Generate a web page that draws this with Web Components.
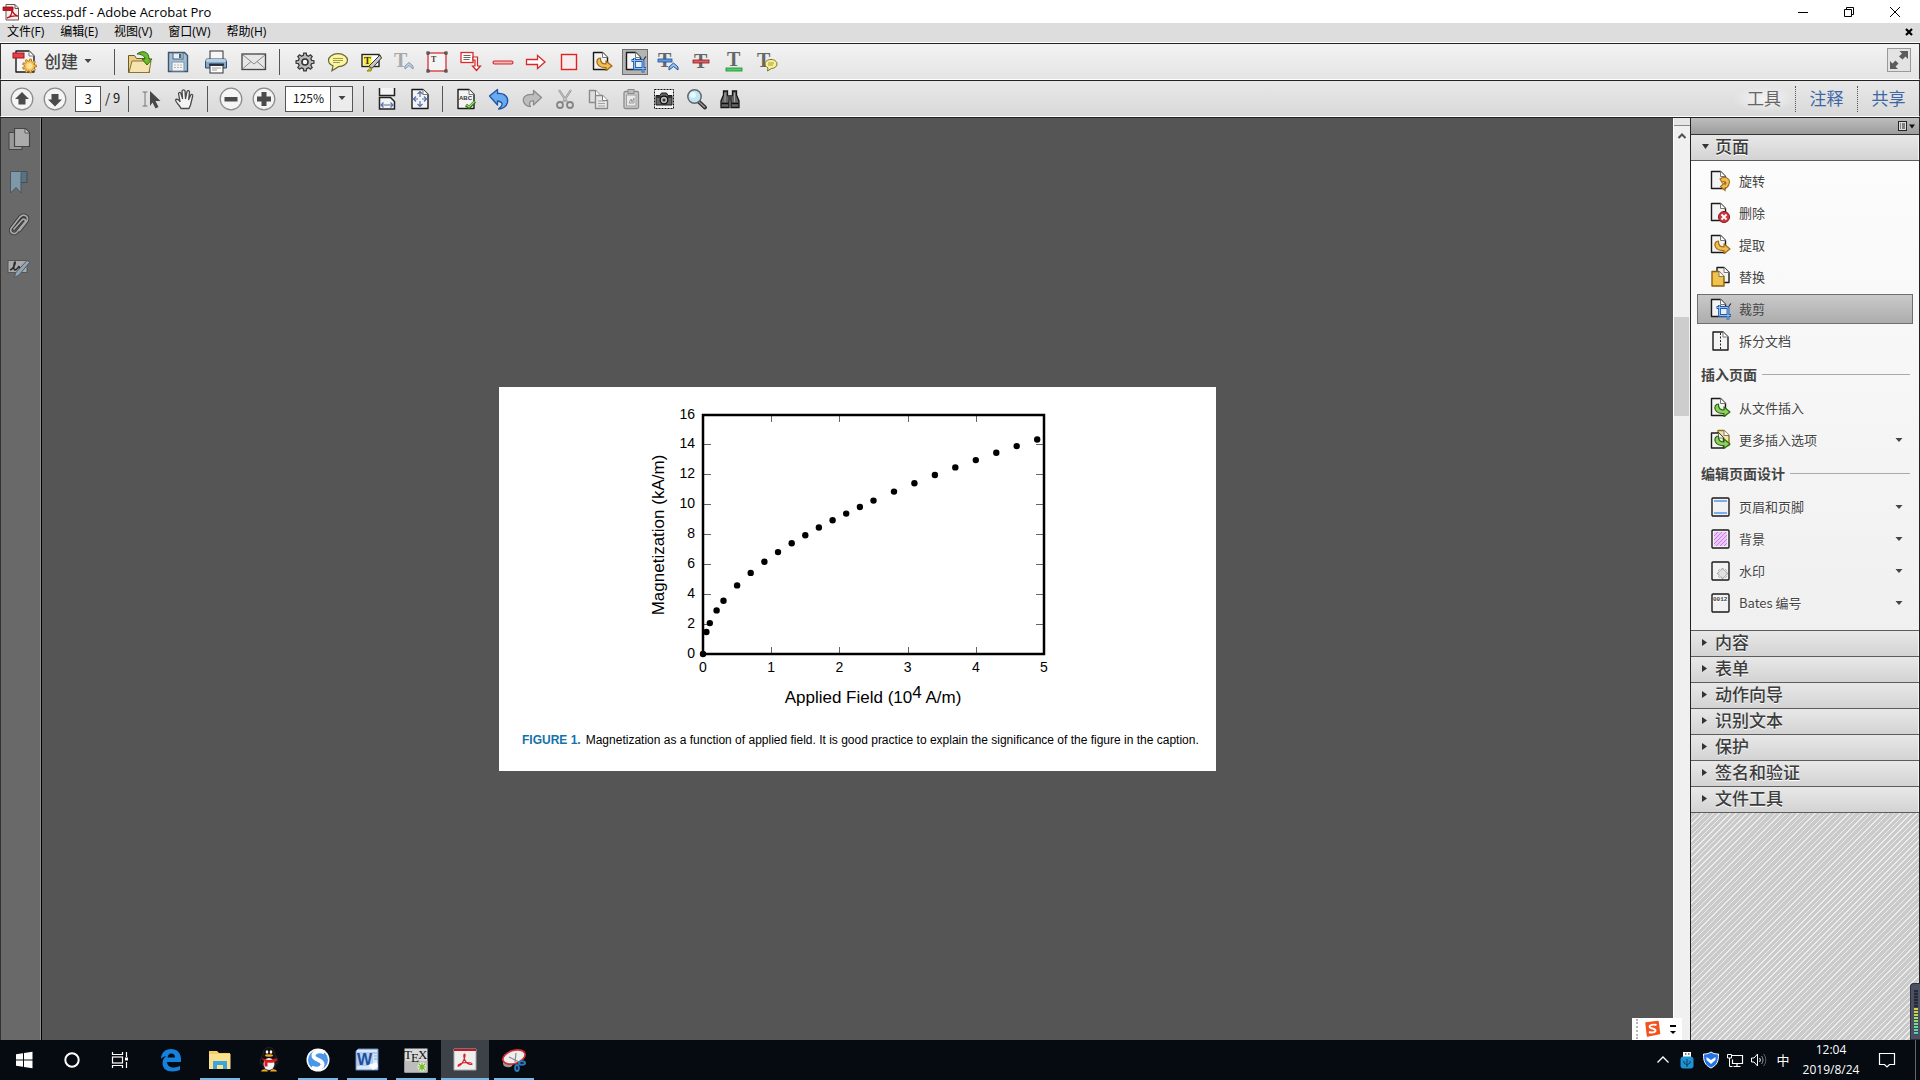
<!DOCTYPE html>
<html lang="zh-CN">
<head>
<meta charset="utf-8">
<title>access.pdf - Adobe Acrobat Pro</title>
<style>
html, body { margin: 0; height: 100%; }
body { font-family: "Open Sans", "Noto Sans CJK SC", sans-serif; font-size: 12px; color: #111; overflow: hidden; background: #555; }
</style>
</head>
<body>
<acrobat-app></acrobat-app>
<script>
const UI = '"Noto Sans CJK SC", "Open Sans", sans-serif';

function define(name, css, html) {
  const tpl = document.createElement('template');
  customElements.define(name, class extends HTMLElement {
    connectedCallback() {
      if (this.shadowRoot) return;
      tpl.innerHTML = '<style>*{box-sizing:border-box}' + css + '</style>' + (typeof html === 'function' ? html(this) : html);
      this.attachShadow({ mode: 'open' }).append(tpl.content.cloneNode(true));
    }
  });
}

/* ---------- icons ---------- */
function gear(cx, cy, ro, ri, n) {
  let d = '';
  for (let i = 0; i < n; i++) {
    const a = i * 2 * Math.PI / n, s = Math.PI / n;
    [[ri, -0.62], [ro, -0.36], [ro, 0.36], [ri, 0.62]].forEach(([r, k], j) => {
      d += (i || j ? 'L' : 'M') + (cx + r * Math.cos(a + k * s)).toFixed(2) + ' ' + (cy + r * Math.sin(a + k * s)).toFixed(2);
    });
  }
  return d + 'Z';
}
const sheet = (x, y, w, h, fill = '#f4f4f4', stroke = '#1a1a1a') =>
  `<path d="M${x} ${y}h${w - 5}l5 5v${h - 5}h${-w}z" fill="${fill}" stroke="${stroke}" stroke-width="1.4" stroke-linejoin="round"/><path d="M${x + w - 5} ${y}v5h5" fill="#fff" stroke="#777"/>`;
const T = (x, y, s, f = '#777') => `<text x="${x}" y="${y}" font-family="Liberation Serif" font-weight="700" font-size="${s}" fill="${f}">T</text>`;
const cropMark = '<rect x="10" y="9" width="8" height="8" fill="#e4ecf5"/><path d="M7.500 9.500h11.500v12M10.500 7v10.500h11.500" fill="none" stroke="#245aa8" stroke-width="2.800"/><path d="M8 9.500h11v11.500M10.500 7.500v10h11" fill="none" stroke="#8cc0f5" stroke-width="1"/><path d="M20 8l2-2.500" stroke="#222" stroke-width="1.200"/>';
const hook = (a, b) => `<path d="M9.500 7c-3 0-4.500 3-3 6 1.500 2.500 4 3.500 7 3.500h1.500v3l6-4.500-6-5v3c-3.500 0-6-1.500-5.500-6z" fill="${a}" stroke="${b}" stroke-width="1.200" stroke-linejoin="round"/>`;
const pageIn = inner => `<svg viewBox="0 0 22 22" width="22" height="22">${sheet(2.5, 1.5, 14, 17)}${inner}</svg>`;
const box = inner => `<svg viewBox="0 0 22 22" width="22" height="22"><rect x="3" y="2" width="17" height="18" rx="1" fill="#f2f2f2" stroke="#1a1a1a" stroke-width="1.400"/>${inner}</svg>`;
const svg = (w, h, inner) => `<svg viewBox="0 0 ${w} ${h}" width="${w}" height="${h}">${inner}</svg>`;

const ICONS = {
  app: svg(18, 18, '<path d="M4 1.500h9l3.500 3.500v12h-12.500z" fill="#f6f0ee" stroke="#6b5550"/><path d="M13 1.500v4h3.500" fill="none" stroke="#6b5550"/><path d="M1 4h10v3.500h-10z" fill="#c81622" stroke="#8b0e16" stroke-width=".8"/><path d="M5 15c4-1 5-4 5-8 1 4 3 5 6 6-4-.5-7 0-11 2z" fill="none" stroke="#c0101c" stroke-width="1.300"/>'),
  create: svg(26, 26, `${sheet(5, 2, 18, 21)}<rect x="2" y="4" width="11" height="5" fill="#e3404b" stroke="#a7121c"/><path d="${gear(18.500, 17, 7, 5, 9)}" fill="#f3c25c" stroke="#b57a1a"/><circle cx="18.500" cy="17" r="3" fill="#fbe09a"/>`),
  open: svg(26, 26, '<path d="M1.500 6.500h6l2 3h13v14h-21z" fill="#e7cf8a" stroke="#6d5a26"/><path d="M5 12h19l-2 11.500h-20z" fill="#f5e3b0" stroke="#8a7337"/><path d="M10 5c5-4 12-3 12 5h3l-5 6-5-6h3c0-3-4-5-8-5z" fill="#6cbb2c" stroke="#2f6a10"/>'),
  save: svg(22, 22, '<path d="M1.500 1.500h16l3 3v16h-19z" fill="#a3bfd8" stroke="#3d5469" stroke-width="1.400"/><rect x="6" y="2" width="10" height="6" fill="#e8eef4" stroke="#4d6479"/><rect x="12" y="3" width="2.500" height="4" fill="#4d6479"/><rect x="5" y="11" width="12" height="9" fill="#f4f4f4" stroke="#7b93a9"/><path d="M7 14h8M7 16.500h8" stroke="#b5b5b5" stroke-dasharray="2 1"/>'),
  print: svg(24, 24, '<rect x="6" y="1" width="13" height="9" fill="#f7f7f7" stroke="#333"/><path d="M2.500 9h19l1 3v6h-21v-6z" fill="#86a9c9" stroke="#34495c"/><path d="M2.500 9h19l.5 3h-20z" fill="#b5cfe4"/><path d="M5 14.500h15" stroke="#1e3347" stroke-width="2"/><rect x="6" y="15.500" width="13" height="7.500" fill="#fff" stroke="#333"/><path d="M8 18h9M8 20h5" stroke="#999"/>'),
  mail: svg(26, 20, '<rect x="1" y="2" width="23.500" height="15.500" fill="#e6e6e6" stroke="#444" stroke-width="1.300"/><path d="M2 3l11 9 11-9M2 16.500l8-7M24 16.500l-8-7" fill="none" stroke="#888"/>'),
  gear: svg(22, 22, `<path d="${gear(11, 11, 9, 6.800, 8)}" fill="#b9b9b9" stroke="#3a3a3a" stroke-width="1.300"/><circle cx="11" cy="11" r="3" fill="#fafafa" stroke="#333" stroke-width="1.600"/>`),
  note: svg(22, 22, '<path d="M11 2.700c5.500 0 9.500 3 9.500 6.500s-4 6.500-9 6.500l-6.500 4 1-5c-3-1-4.500-3-4.500-5.500 0-3.500 4-6.500 9.500-6.500z" fill="#fbf6a0" stroke="#6b6638" stroke-width="1.200"/><path d="M6 7.500h10M6 9.500h10M6 11.500h7" stroke="#a39b4b"/>'),
  highlight: svg(22, 22, `<rect x="2" y="3.500" width="17" height="12" fill="#fff" stroke="#222" stroke-width="1.400"/><rect x="3.500" y="5" width="8" height="9" fill="#ffef2e"/>${T(4, 13, 10, '#333')}<path d="M20 4l1.500 3-9 10-4-1.500z" fill="#c4c4c4" stroke="#333"/><path d="M12 16l-5 4h4z" fill="#ded320" stroke="#8b8300"/>`),
  textUp: svg(22, 22, `${T(1, 16, 20, '#a8a8a8')}<path d="M12 18v-3l4-3.500 4 3.500v3l-4-3.500z" fill="#c2d2e4" stroke="#8296ad"/>`),
  textBox: svg(22, 22, `<rect x="2" y="2" width="18" height="18" fill="#f4f4f4" stroke="#d02428" stroke-width="1.200"/><g fill="#fff" stroke="#222"><rect x="1" y="1" width="2" height="2"/><rect x="19" y="1" width="2" height="2"/><rect x="1" y="19" width="2" height="2"/><rect x="19" y="19" width="2" height="2"/></g>${T(5, 11, 8, '#444')}`),
  callout: svg(22, 22, '<rect x="2" y="1.500" width="12" height="10" fill="#fff" stroke="#e02a2a" stroke-width="1.300"/><path d="M4.500 4.500h7M4.500 6.500h7M4.500 8.500h6" stroke="#666"/><path d="M14 6h4.500v9h3l-4 4.500-4-4.500h2.500v-6h-2z" fill="#fff" stroke="#d02428" stroke-width="1.200"/>'),
  line: svg(22, 22, '<rect x="1" y="10" width="20" height="3" rx="1.500" fill="#f7b9b9" stroke="#d02428" stroke-width="1.100"/>'),
  arrow: svg(22, 22, '<path d="M1.500 8.500h11v-4l7.500 6.500-7.500 6.500v-4h-11z" fill="#fff" stroke="#d82a2a" stroke-width="1.300"/>'),
  rect: svg(22, 22, '<rect x="3.500" y="3.500" width="15" height="15" fill="#f6eeee" stroke="#e02222" stroke-width="1.400"/>'),
  extract: pageIn(hook('#f1bd55', '#a16a13')),
  crop: pageIn(cropMark),
  replaceT: svg(22, 22, `${T(1, 16, 20, '#666')}<rect x="1" y="8" width="14" height="3" fill="#5d9ce0" stroke="#1d4f9c" stroke-width=".8"/><path d="M12 19v-3l4.500-4 4.500 4v3l-4.500-3.500z" fill="#9cc4f0" stroke="#1d4f9c"/>`),
  strikeT: svg(22, 22, `${T(4, 17, 20, '#666')}<rect x="3" y="9" width="16" height="3" fill="#dd6064" stroke="#8e1519" stroke-width=".8"/>`),
  underT: svg(22, 22, `${T(4, 15, 20, '#666')}<rect x="3" y="17" width="16" height="3" fill="#4fd16a" stroke="#148a2b" stroke-width=".8"/>`),
  noteT: svg(22, 22, `${T(1, 16, 20, '#666')}<path d="M15 8.500c3.500 0 6 2 6 4.500s-2.500 4.500-5.500 4.500l-4 2.500.5-3c-2-1-3-2.500-3-4 0-2.500 2.500-4.500 6-4.500z" fill="#f6f08e" stroke="#77722f"/><path d="M12 12h6M12 14h5" stroke="#a39b4b"/>`),
  up: svg(24, 24, '<circle cx="12" cy="12" r="10.800" fill="#f5f5f5" stroke="#8c8c8c" stroke-width="1.300"/><path d="M12 5l7 7h-3.500v5.500h-7v-5.500h-3.500z" fill="#4b4b4b"/>'),
  down: svg(24, 24, '<circle cx="12" cy="12" r="10.800" fill="#f5f5f5" stroke="#8c8c8c" stroke-width="1.300"/><path d="M12 19.500l7-7h-3.500v-5.500h-7v5.500h-3.500z" fill="#4b4b4b"/>'),
  minus: svg(24, 24, '<circle cx="12" cy="12" r="10.800" fill="#f5f5f5" stroke="#8c8c8c" stroke-width="1.300"/><rect x="5.500" y="10" width="13" height="4.500" fill="#4b4b4b"/>'),
  plus: svg(24, 24, '<circle cx="12" cy="12" r="10.800" fill="#f5f5f5" stroke="#8c8c8c" stroke-width="1.300"/><path d="M9.500 5h5v4.500h4.500v5h-4.500v4.500h-5v-4.500h-4.500v-5h4.500z" fill="#4b4b4b"/>'),
  select: svg(22, 22, '<path d="M1.500 4h5M1.500 18h5M4 4v14" stroke="#777" fill="none"/><path d="M9 3l10.500 10h-5l3 6-3 1.500-3-6-2.500 3.500z" fill="#474747"/>'),
  hand: svg(22, 22, '<path d="M7 20.500c-1-3-5-5.500-5.500-8.500 1-1.500 3-.5 4.500 1.500l-1.500-8c.5-1.500 2-1.500 2.500 0l1.500 5-.5-7.500c.5-1.500 2.500-1.500 3 0l.5 7.500 1.500-7c.8-1.300 2.500-1 2.500.5l-.8 7.500 2-4.500c1-1 2.300-.5 2 1l-2.200 9-1.500 3.500z" fill="#f4f4f4" stroke="#4a4a4a" stroke-width="1.300" stroke-linejoin="round"/>'),
  fitW: svg(22, 24, '<path d="M3.500 1v7.500h15v-7.500" fill="#f4f4f4" stroke="#222" stroke-width="1.500"/><path d="M3.500 22v-11.500h11l4 4v7.500z" fill="#f4f4f4" stroke="#222" stroke-width="1.500"/><path d="M5 18h12M7.500 15.500l-2.500 2.500 2.500 2.500M14.500 15.500l2.500 2.500-2.500 2.500" fill="none" stroke="#5570b0" stroke-width="1.200"/>'),
  fitP: svg(22, 22, `${sheet(3, 1.500, 16, 19)}<path d="M11 3.500v15M4.500 11h13M8.500 6l2.500-2.500 2.500 2.500M8.500 16l2.500 2.500 2.500-2.500M7 8.500l-2.500 2.500 2.500 2.500M15 8.500l2.500 2.500-2.500 2.500" fill="none" stroke="#5570b0" stroke-width="1.200"/><rect x="9" y="9" width="4" height="4" fill="#f4f4f4"/>`),
  abc: svg(22, 22, `${sheet(3, 1.500, 16, 19)}<text x="4" y="12" font-family="Liberation Sans" font-size="6" font-weight="700" fill="#333">ABC</text><path d="M11 17l3 2.500 6-6" fill="none" stroke="#2f6a10" stroke-width="3"/><path d="M11.500 17l2.500 2 5.500-5.500" fill="none" stroke="#a5df7c" stroke-width="1.200"/>`),
  undo: svg(22, 22, '<path d="M1.500 8l8-6.500v4c8-.5 11 4 10 9-1 4-5 6.500-9 6.500 4-3 6-7-1-8v4z" fill="#6aaaf0" stroke="#1d55a5" stroke-width="1.300" stroke-linejoin="round"/>'),
  redo: svg(22, 22, '<path d="M20.500 9.500l-8-7v4c-8-1-11 3-10 7 1 3 4 5 7 5-2-3-1-6 3-5.500v4z" fill="#bdbdbd" stroke="#8b8b8b" stroke-width="1.300" stroke-linejoin="round"/>'),
  cut: svg(22, 22, '<path d="M5 2l8 12M17 2l-8 12" stroke="#8b8b8b" stroke-width="2.200"/><path d="M5 2l8 12M17 2l-8 12" stroke="#d9d9d9" stroke-width=".8"/><g fill="none" stroke="#858585" stroke-width="1.800"><circle cx="6" cy="17" r="3"/><circle cx="16" cy="17" r="3"/></g>'),
  copy: svg(22, 22, `${sheet(2.500, 2.500, 11, 12, '#dedede', '#8b8b8b')}${sheet(8.500, 7.500, 12, 13, '#e8e8e8', '#8b8b8b')}<path d="M11 13h7M11 15.500h7M11 18h7" stroke="#a0a0a0"/>`),
  paste: svg(22, 22, '<rect x="4" y="3.500" width="14.500" height="17" rx="1.500" fill="#cfcfcf" stroke="#8b8b8b" stroke-width="1.300"/><rect x="6.500" y="7" width="9.500" height="11" fill="#e9e9e9" stroke="#a0a0a0"/><rect x="8" y="1.500" width="6" height="4" fill="#bbb" stroke="#8b8b8b"/><path d="M9 15l2-4 1 3 2-4v5z" fill="none" stroke="#999"/>'),
  camera: svg(22, 22, '<rect x="1.500" y="1.500" width="19" height="19" fill="#f4f4f4" stroke="#111" stroke-dasharray="2 1"/><path d="M3 7.500h4l1.500-2.500h5l1.500 2.500h4v9.500h-16z" fill="#666" stroke="#1a1a1a"/><path d="M3 8h16v2h-16z" fill="#333"/><circle cx="11" cy="12" r="3.800" fill="#bbb" stroke="#111" stroke-width="1.300"/><circle cx="11" cy="12" r="1.500" fill="#333"/>'),
  zoom: svg(22, 22, '<path d="M12 13l7 6.500" stroke="#333" stroke-width="4" stroke-linecap="round"/><path d="M13 14l6 5.500" stroke="#999" stroke-width="1.300"/><circle cx="8.500" cy="8.500" r="6.700" fill="#bfe6f5" stroke="#666" stroke-width="1.500"/><circle cx="7" cy="7" r="3" fill="#e8f8fd"/>'),
  binoc: svg(22, 22, '<path d="M4.500 3h4v4l1.500 2v10.500h-8v-6.500l2.500-6zM13.500 3h4v4l2.500 6v6.500h-8v-10.500l1.500-2z" fill="#666" stroke="#161616" stroke-width="1.300"/><rect x="9" y="7" width="4" height="6" fill="#444"/><path d="M2.500 15.500h7M12.500 15.500h7" stroke="#111" stroke-width="1.500"/><path d="M6 5v9M15.500 5v9" stroke="#aaa"/>'),
  expand: svg(24, 24, '<rect x=".5" y=".5" width="23" height="23" fill="#e3e3e3" stroke="#999"/><path d="M21 3v8l-2.500-2.500-3 3-3.500-3 3-3-2.500-2.500zM3 21v-8l2.500 2.500 3-3 3 3-3 3 2.500 2.500z" fill="#5c5c5c"/>'),
  pages: svg(24, 24, '<path d="M2 5.500h13v17h-13z" fill="#999" stroke="#454545"/><path d="M7.500 1.500h11l4 4v14h-15z" fill="#acacac" stroke="#454545" stroke-width="1.200"/><path d="M18 2v4h4" fill="#ccc" stroke="#555"/>'),
  bookmark: svg(24, 24, '<path d="M13 1.500h7v11h-7z" fill="#5a7383" stroke="#3f4d57"/><path d="M3.500 1.500h12c-1.500 1-1.500 2-1.500 4v17.500l-5-5.500-5.500 5.500z" fill="#7f98a8" stroke="#47555e"/>'),
  clip: svg(24, 24, '<g fill="none" stroke-linecap="round"><path d="M7 16l8-9c2-2 4.500 0 3 2l-8 10c-3 3.500-8.500 0-5.500-4l8.500-11c4-4 9-.5 7 4l-7.500 9.500" stroke="#333" stroke-width="3.400"/><path d="M7 16l8-9c2-2 4.500 0 3 2l-8 10c-3 3.500-8.500 0-5.500-4l8.500-11c4-4 9-.5 7 4l-7.500 9.500" stroke="#a8a8a8" stroke-width="1.800"/></g>'),
  sign: svg(24, 24, '<rect x="1" y="4.500" width="19" height="12" fill="#aaa" stroke="#555"/><path d="M3 14c4-1 6-8 5-8s-2 8 0 8 4-4 4-4 0 4 3 2" fill="none" stroke="#2c2c2c" stroke-width="1.500"/><path d="M20 4.500l3 1.500-11 13-4.500 2.500 1-4.500z" fill="#92a5b5" stroke="#4c5a66"/>'),
  rotate: pageIn('<path d="M11 9c5-4 11 0 9 5-1 3-3 4-4 4v2.500l-4.500-4 4.500-4v2c1.500-1 1-3-1-3-1.500 0-2 .5-2 1z" fill="#f1bd55" stroke="#a16a13" stroke-width="1.100"/>'),
  remove: pageIn('<circle cx="15" cy="15" r="5.500" fill="#d13a40" stroke="#8d1318"/><path d="M12.500 12.500l5 5M17.500 12.500l-5 5" stroke="#fff" stroke-width="1.800"/>'),
  replace: svg(22, 22, `${sheet(8, 1.500, 12, 15)}${sheet(3, 5.500, 12, 14.500, '#f1c24c', '#8d5f10')}`),
  split: svg(22, 22, `${sheet(4, 2, 15, 18)}<path d="M11.500 3v17" stroke="#222" stroke-dasharray="2 1.500"/>`),
  insert: pageIn(hook('#8fd15f', '#2f6a10')),
  insertMore: svg(22, 22, `${sheet(9, 1.500, 11, 15, '#f8e6a0', '#8d7330')}${sheet(2.500, 4, 12, 15)}${hook('#8fd15f', '#2f6a10')}`),
  header: box('<path d="M5 5h13M5 17h13" stroke="#78aef0" stroke-width="2"/>'),
  back: box('<rect x="5" y="4" width="13" height="14" fill="#ecc8f6"/><path d="M5 8l4-4M5 12l8-8M5 16l12-12M7 18l11-11M11 18l7-7M15 18l3-3" stroke="#cc7bea"/>'),
  water: box(`<path d="${gear(13.500, 13.500, 5, 3.800, 8)}" fill="#e2e2e2" stroke="#a9a9a9"/>`),
  bates: box('<text x="4" y="9" font-family="Liberation Mono" font-size="6" font-weight="700" fill="#444">0012</text>'),
  /* taskbar */
  win: svg(24, 24, '<path d="M4 6.200l7-1v6.300h-7zM12 5l8.500-1.200v7.700h-8.500zM4 12.500h7v6.300l-7-1zM12 12.500h8.500v7.700l-8.500-1.200z" fill="#fff"/>'),
  cortana: svg(24, 24, '<circle cx="12" cy="12" r="6.700" fill="none" stroke="#fff" stroke-width="2"/>'),
  taskview: svg(24, 24, '<path d="M4.500 4v2.500h10v-2.500M4.500 20v-2.500h10v2.500M18.500 4v5M18.500 14v6" fill="none" stroke="#fff" stroke-width="1.200"/><rect x="4.500" y="9" width="10" height="6" fill="none" stroke="#fff" stroke-width="1.200"/><rect x="17" y="9.500" width="3" height="3" fill="#fff"/>'),
  edge: svg(26, 26, '<path d="M3 12c0-6 4-10 10-10s10 4 10 10v3h-14c.5 4 3 5.500 7 5.500 2.500 0 4.500-.7 6-1.700v4c-2 1-4.500 1.700-7.500 1.700-6.500 0-10-3.500-10-8.500 0-3 1.500-5.500 4-7-3 .5-4.500 1.500-5.500 3zM9.500 10.500h7.500c0-2.500-1.500-4-3.500-4s-3.500 1.500-4 4z" fill="#1580dd"/>'),
  folder: svg(24, 24, '<path d="M1 3h8l2 2h11v16h-21z" fill="#f5cf63"/><path d="M1 6h21.500v15h-21.500z" fill="#fbe18d"/><path d="M5 21v-8h14v8h-4v-4h-6v4z" fill="#39a5dc"/>'),
  qq: svg(26, 26, '<path d="M13 .5c4 0 6 3 6 7 2 3 3.500 6 3 9-.5 1-1.500 0-2-1 0 5-3 8-7 8s-7-3-7-8c-.5 1-1.500 2-2 1-.5-3 1-6 3-9 0-4 2-7 6-7z" fill="#111" stroke="#333" stroke-width=".6"/><ellipse cx="13" cy="17" rx="5.500" ry="6" fill="#f5f5f5"/><ellipse cx="11" cy="5" rx="1.300" ry="1.800" fill="#fff"/><ellipse cx="15" cy="5" rx="1.300" ry="1.800" fill="#fff"/><ellipse cx="13" cy="8.500" rx="4" ry="1.200" fill="#f2a71e"/><path d="M5.500 11c5 2.500 10 2.500 15 0l.5 3c-4 2-7 2-9.500 1.500v4h-3v-5z" fill="#d8181f"/><path d="M5 24.500c1-3 6-3 7 0zM21 24.500c-1-3-6-3-7 0z" fill="#f2a71e"/>'),
  sbrowser: svg(26, 26, '<circle cx="13" cy="13" r="11.500" fill="#fff"/><circle cx="13" cy="13" r="10" fill="#4a96ea"/><path d="M19.500 5.500c-4-2.500-11.500-1-11 3.500.5 4.500 9.500 3.500 9 8.500-.5 4-6 5.500-11 3" fill="none" stroke="#fff" stroke-width="4"/>'),
  word: svg(24, 26, '<path d="M3 2h20v21h-22v-19z" fill="#dce8f7" stroke="#5d88c4"/><path d="M2 5h16v14h-16z" fill="#b4cdee"/><text x="2" y="18" font-family="Liberation Sans" font-weight="700" font-size="16" fill="#1b4fa0">W</text><path d="M18 6h4M19 9h3M19 12h3" stroke="#7ba2d8"/><path d="M13 18l9-3 1 5-5 3z" fill="#fafcff"/>'),
  tex: svg(24, 26, '<path d="M.5 1.500h23v24h-23z" fill="#d9d9d9"/><path d="M.5 14h23v11.500h-23z" fill="#bdbdbd"/><text x="0" y="12" font-family="Liberation Serif" font-size="13" fill="#111">T<tspan x="7" dy="3">E</tspan><tspan x="14" dy="-3">X</tspan></text><circle cx="18" cy="20" r="4.500" fill="#e8f5d8"/><path d="M18 16v8M14 20h8M15 17l6 6M21 17l-6 6" stroke="#79b82f" stroke-width="1.200"/>'),
  acro: svg(24, 26, '<path d="M1 2h22v21h-22z" fill="#efefef" stroke="#aaa"/><path d="M1 2h22v2h-22z" fill="#c4161c"/><path d="M5 19c0-2 5-3.500 9-3.500 3 0 5 .5 5 1.500s-3 .5-5-1c-2-2-4-6-3-8.500.5-1 1.500 0 1 1.500-.5 4-4 9.500-6 10-.5.300-1 0-1 0z" fill="none" stroke="#d4262c" stroke-width="1.200"/>'),
  snip: svg(26, 26, '<path d="M2 14v3c1 4 7 4 9 2l1-3z" fill="#999"/><ellipse cx="13" cy="10" rx="11.500" ry="6.500" transform="rotate(-18 13 10)" fill="#eee" stroke="#d22d35" stroke-width="1.600"/><path d="M8 10l10 5M15 6l-1 9" stroke="#888" stroke-width="1.200"/><g fill="none" stroke="#2b79bd" stroke-width="2"><ellipse cx="21" cy="16" rx="3" ry="1.800"/><ellipse cx="16" cy="21" rx="1.800" ry="3"/></g>'),
  chev: svg(14, 14, '<path d="M1.500 9.500l5.500-5.500 5.500 5.500" fill="none" stroke="#fff" stroke-width="1.300"/>'),
  usb: svg(16, 18, '<rect x="4" y="1" width="8" height="5" fill="#fff"/><path d="M6 3h1.500M9 3h1.500" stroke="#000"/><rect x="1.500" y="5.500" width="13" height="12" rx="3" fill="#1f92d1"/><path d="M8 8v8M5 10v2l3 2 3-2v-2" fill="none" stroke="#0b3f60"/>'),
  shield: svg(18, 18, '<path d="M9 1c3 2 5 2 7.500 2 0 7-1 11-7.500 14-6.500-3-7.500-7-7.500-14 2.500 0 4.500 0 7.500-2z" fill="#2273e8" stroke="#fff"/><path d="M4.500 6l4.500 3 4.500-3v3l-4.500 4-4.500-4z" fill="#fff"/>'),
  net: svg(18, 18, '<path d="M5 4.500h11.500v8h-10v-4M11 12.500v3M7.500 15.500h7" fill="none" stroke="#fff" stroke-width="1.200"/><path d="M1.500 3.500h4v3.500h-4zM3.500 7v8.500h3" fill="none" stroke="#fff"/>'),
  vol: svg(18, 18, '<path d="M1.500 7h2.500l3.500-4v12l-3.500-4h-2.500z" fill="none" stroke="#fff"/><path d="M9.500 7c1 1 1 3 0 4" fill="none" stroke="#fff"/><path d="M11.500 5c2 2 2 6 0 8" fill="none" stroke="#999"/><path d="M13.500 3c3 3 3 9 0 12" fill="none" stroke="#666"/>'),
  notif: svg(18, 18, '<path d="M1.500 2.500h15v11h-5l-2.500 2.500-2.500-2.500h-5z" fill="none" stroke="#fff" stroke-width="1.200"/>'),
  sogou: svg(18, 18, '<path d="M3 3l12-1.500 1.500 12-12 2.500z" fill="#f4511e" stroke="#f4511e" stroke-width="1.500" stroke-linejoin="round"/><path d="M13.500 5c-3-1-7 0-7 1.800 0 2.200 6 1.200 6 3.700 0 2-4 2.500-6.500 1.500" fill="none" stroke="#fff" stroke-width="1.900"/>'),
  min: svg(12, 12, '<path d="M1 6.500h10" stroke="#000"/>'),
  restore: svg(12, 12, '<path d="M3.500 3.500v-2h7v7h-2M1.500 3.500h7v7h-7z" fill="none" stroke="#000"/>'),
  close: svg(12, 12, '<path d="M1 1l10 10M11 1l-10 10" stroke="#000"/>'),
  closeDoc: svg(8, 8, '<path d="M1 1l6 6M7 1l-6 6" stroke="#000" stroke-width="2.200"/>'),
  caret: svg(8, 5, '<path d="M.5 0h7l-3.500 4z" fill="#444"/>'),
  tri: svg(6, 8, '<path d="M0 1l5 3.500-5 3.500z" fill="#333"/>'),
  triDown: svg(8, 6, '<path d="M0 1h7l-3.500 5z" fill="#333"/>'),
  menuList: svg(18, 10, '<rect x=".5" y=".5" width="8" height="9" fill="#ddd" stroke="#222"/><path d="M2 3h1M4 3h3M2 5h1M4 5h3M2 7h1M4 7h3" stroke="#222"/><path d="M11 3.500h6l-3 4z" fill="#111"/>'),
  scrollUp: svg(10, 8, '<path d="M1.500 6l3.500-3.500 3.500 3.500" fill="none" stroke="#505050" stroke-width="2"/>')
};

define('ui-icon', ':host{display:inline-flex}svg{display:block;overflow:visible}', el => ICONS[el.getAttribute('name')]);

/* ---------- shared controls ---------- */
define('tool-button', `
:host{display:inline-flex;flex:none;justify-content:center;align-items:center;width:33px;height:100%}
:host([wide]){width:38px}
button{all:unset;display:flex;align-items:center;justify-content:center;width:26px;height:26px}
:host([on]) button{box-sizing:border-box;background:#b4b4b4;border:1px solid #6e6e6e}`,
  el => `<button type="button" aria-label="${el.getAttribute('label') || ''}"><ui-icon name="${el.getAttribute('icon')}"></ui-icon></button>`);

define('tool-sep', ':host{display:block;flex:none;width:1px;height:26px;background:#555;margin:0 6px}', '');

/* ---------- title and menu ---------- */
define('title-bar', `
:host{display:flex;align-items:center;height:23px;background:#fff;padding-left:2px;flex:none;color:#000}
h1{font-size:13px;line-height:20px;font-weight:400;margin:0 auto 0 3px}
button{all:unset;width:46px;height:20px;display:flex;align-items:center;justify-content:center}
nav{display:flex;padding-right:2px}`,
`<ui-icon name="app"></ui-icon><h1>access.pdf - Adobe Acrobat Pro</h1>
<nav><button aria-label="最小化"><ui-icon name="min"></ui-icon></button><button aria-label="还原"><ui-icon name="restore"></ui-icon></button><button aria-label="关闭"><ui-icon name="close"></ui-icon></button></nav>`);

define('menu-bar', `
:host{display:flex;align-items:center;gap:16px;height:20px;background:#ddd;padding:0 7px;flex:none;border-bottom:1px solid #fff}
button{all:unset;font-size:12px;line-height:18px;color:#000;padding-bottom:1px}
.x{margin-left:auto}`,
  ['文件(F)', '编辑(E)', '视图(V)', '窗口(W)', '帮助(H)'].map(t => `<button>${t}</button>`).join('') + '<button class="x" aria-label="关闭文档"><ui-icon name="closeDoc"></ui-icon></button>');

/* ---------- toolbars ---------- */
const btns = (list, attr = '') => list.split(' ').map(n => `<tool-button ${attr} ${n === 'crop' ? 'on' : ''} icon="${n}" label="${n}"></tool-button>`).join('');
const barCss = `:host{display:flex;align-items:center;height:37px;flex:none;border-top:1px solid #222;border-bottom:1px solid #fff;background:linear-gradient(#f3f3f3,#e4e4e4);border-left:1px solid #333;border-right:1px solid #333}`;

define('file-toolbar', barCss + `
.create{all:unset;display:flex;align-items:center;font:500 17px/24px ${UI};color:#444;padding-left:10px;width:107px;box-sizing:border-box}
.create span{margin:0 6px 2px 7px}
.rest{display:flex;height:100%;margin-left:2px}
.x{all:unset;margin-left:auto;margin-right:8px;padding-top:1px}`,
`<button class="create"><ui-icon name="create"></ui-icon><span>创建</span><ui-icon name="caret"></ui-icon></button><tool-sep></tool-sep>
${btns('open save print mail', 'wide')}<tool-sep></tool-sep><div class="rest">${btns('gear note highlight textUp textBox callout line arrow rect extract crop replaceT strikeT underT noteT')}</div>
<button class="x" aria-label="阅读模式"><ui-icon name="expand"></ui-icon></button>`);

define('view-toolbar', barCss.replace('#f3f3f3,#e4e4e4', '#e8e8e8,#d9d9d9') + `
:host{padding-left:4px}
input,select{appearance:none;box-sizing:border-box;height:26px;border:1px solid #555;border-radius:0;background:#fff;font:12px/22px ${UI};color:#111;margin:0;padding:0 0 1px;outline:none}
input{width:26px;text-align:center;margin-left:4px;font-size:13px}
.of{font:13px/20px ${UI};width:17px;margin:0 0 1px 4px;white-space:nowrap}
.zoom{display:grid;grid-template-columns:46px 22px;margin:0 4px 0 5px}
.zoom select{grid-area:1/1/2/3;padding-left:7px;width:68px;background:linear-gradient(#555,#555) 44px 0/1px 100% no-repeat,linear-gradient(90deg,#fff 44px,#ececec 44px)}
.zoom ui-icon{grid-area:1/2;place-self:center;pointer-events:none}
nav{display:flex;margin-left:auto;height:26px}
a{width:62px;box-sizing:border-box;text-align:center;font:17px/24px ${UI};color:#3f67a6;text-decoration:none;border-left:1px dotted #555}
a:first-child{color:#666;border-left:0;background:radial-gradient(closest-side,#f4f4f4,transparent)}`,
`${btns('up down')}<input aria-label="页码" value="3"><span class="of">/ 9</span><tool-sep></tool-sep>${btns('select hand')}<tool-sep></tool-sep>${btns('minus plus')}
<div class="zoom"><select aria-label="缩放"><option>125%</option></select><ui-icon name="caret"></ui-icon></div><tool-sep></tool-sep>${btns('fitW fitP')}<tool-sep></tool-sep>${btns('abc undo redo cut copy paste camera zoom binoc')}
<nav><a href="#tools">工具</a><a href="#comment">注释</a><a href="#share">共享</a></nav>`);

/* ---------- document ---------- */
define('nav-rail', `
:host{display:flex;flex-direction:column;align-items:flex-start;gap:19px;width:42px;flex:none;background:#696969;border-left:1px solid #333;border-right:1px solid #000;box-shadow:inset -1px 0 #8d8d8d;padding:9px 0 0 6px}
button{all:unset;display:flex;height:24px}`,
  ['pages', 'bookmark', 'clip', 'sign'].map(n => `<button aria-label="${n}"><ui-icon name="${n}"></ui-icon></button>`).join(''));

define('magnetization-chart', ':host{display:block}svg{display:block}text{font-family:"Liberation Sans",sans-serif;fill:#000}', () => {
  const L = 204, R = 545, Tp = 28, B = 267, X = v => L + v * (R - L) / 5, Y = v => B - v * (B - Tp) / 16;
  const pts = [[0, 0], [.05, 1.47], [.1, 2.07], [.2, 2.92], [.3, 3.57], [.5, 4.59], [.7, 5.43], [.9, 6.17], [1.1, 6.82], [1.3, 7.42], [1.5, 7.95], [1.7, 8.47], [1.9, 8.96], [2.1, 9.4], [2.3, 9.84], [2.5, 10.27], [2.8, 10.87], [3.1, 11.43], [3.4, 11.98], [3.7, 12.49], [4, 12.98], [4.3, 13.47], [4.6, 13.92], [4.9, 14.36]];
  let s = '';
  for (let v = 0; v <= 16; v += 2) {
    s += `<text x="196" y="${Math.floor(Y(v)) + 4}" font-size="14" text-anchor="end">${v}</text>`;
    if (v && v < 16) s += `<path d="M${L} ${Math.floor(Y(v)) + .5}h8M${R} ${Math.floor(Y(v)) + .5}h-8" stroke="#666"/>`;
  }
  for (let v = 0; v <= 5; v++) {
    s += `<text x="${X(v)}" y="285" font-size="14" text-anchor="middle">${v}</text>`;
    if (v && v < 5) s += `<path d="M${Math.round(X(v)) + .5} ${B}v-7M${Math.round(X(v)) + .5} ${Tp}v7" stroke="#666"/>`;
  }
  s += `<rect x="${L}" y="${Tp}" width="${R - L}" height="${B - Tp}" fill="none" stroke="#000" stroke-width="2.500"/>`;
  s += pts.map(p => `<circle cx="${X(p[0]).toFixed(1)}" cy="${Y(p[1]).toFixed(1)}" r="3.200"/>`).join('');
  return `<svg width="717" height="340" viewBox="0 0 717 340" role="img">${s}
<text x="374" y="316" font-size="17" text-anchor="middle">Applied Field (10<tspan dy="-5" font-size="17">4</tspan><tspan dy="5"> A/m)</tspan></text>
<text transform="translate(165 148) rotate(-90)" font-size="17" text-anchor="middle">Magnetization (kA/m)</text></svg>`;
});

define('pdf-page', `
:host{display:block;background:#fff;width:717px;padding-bottom:18px;color:#000}
figure{margin:0}
figcaption{font:12px/26px "Liberation Sans",sans-serif;padding-left:23px;white-space:nowrap}
b{color:#1272ad;margin-right:5px}`,
`<figure><magnetization-chart></magnetization-chart><figcaption><b>FIGURE 1.</b>Magnetization as a function of applied field. It is good practice to explain the significance of the figure in the caption.</figcaption></figure>`);

define('doc-view', ':host{display:flex;flex:1;min-width:0;align-items:center;justify-content:center;background:#555}', '<pdf-page></pdf-page>');

define('doc-scrollbar', `
:host{display:flex;flex-direction:column;align-items:center;flex:none;width:17px;background:#f0f0f0;border-left:1px solid #fff}
.split{align-self:stretch;height:8px;background:#e6e6e6;border-bottom:1px solid #888}
.up{height:19px;display:flex;align-items:center}
.track{align-self:stretch;flex:1;display:grid;grid-template-rows:19fr 11fr 69fr}
.thumb{grid-row:2;background:#cdcdcd;margin-right:1px}`,
'<div class="split"></div><span class="up"><ui-icon name="scrollUp"></ui-icon></span><div class="track"><div class="thumb"></div></div>');

/* ---------- side panel ---------- */
define('panel-item', `
:host{display:block;padding:1px 6px}
button{all:unset;box-sizing:border-box;width:100%;height:30px;border:1px solid transparent;display:flex;align-items:center;padding:0 9px 0 11px;font:13px/20px ${UI};color:#444;text-shadow:0 1px #fff}
:host([on]) button{background:linear-gradient(#c9c9c9,#adadad);border-color:#6e6e6e;text-shadow:none}
span{flex:1;margin-left:8px}`,
  el => `<button><ui-icon name="${el.getAttribute('icon')}"></ui-icon><span><slot></slot></span>${el.hasAttribute('more') ? '<ui-icon name="caret"></ui-icon>' : ''}</button>`);

define('panel-group', `
:host{display:flex;align-items:center;gap:5px;height:35px;padding:0 9px 0 10px}
h3{margin:0;font:700 14px/20px ${UI};color:#444;padding-bottom:1px}
i{flex:1;height:1px;background:#aaa}`, '<h3><slot></slot></h3><i></i>');

define('panel-section', `
:host{display:block;border-bottom:1px solid #5c5c5c}
button{all:unset;box-sizing:border-box;width:100%;height:25px;display:flex;align-items:center;padding:0 0 3px 11px;font:500 17px/22px ${UI};color:#3c3c3c;background:linear-gradient(#e8e8e8,#d3d3d3);text-shadow:0 1px #fff;border-right:1px solid #f2f2f2}
ui-icon{width:13px}`,
  el => `<button><ui-icon name="${el.hasAttribute('open') ? 'triDown' : 'tri'}"></ui-icon>${el.getAttribute('label')}</button><slot></slot>`);

define('side-panel', `
:host{display:flex;flex-direction:column;flex:none;width:230px;border-left:1px solid #222;border-right:1px solid #222;background:repeating-linear-gradient(135deg,#cacaca 0 3px,#ececec 3px 4px)}
.top{height:17px;flex:none;background:linear-gradient(#bdbdbd,#9c9c9c);border-bottom:1px solid #333;display:flex;justify-content:flex-end;align-items:center;padding-right:3px}
.body{border-top:1px solid #5c5c5c;background:linear-gradient(#fcfcfc,#f0f0f0);padding:4px 0 11px}`,
`<div class="top"><ui-icon name="menuList"></ui-icon></div>
<panel-section open label="页面"><div class="body">
<panel-item icon="rotate">旋转</panel-item><panel-item icon="remove">删除</panel-item><panel-item icon="extract">提取</panel-item><panel-item icon="replace">替换</panel-item><panel-item icon="crop" on>裁剪</panel-item><panel-item icon="split">拆分文档</panel-item>
<panel-group>插入页面</panel-group><panel-item icon="insert">从文件插入</panel-item><panel-item icon="insertMore" more>更多插入选项</panel-item>
<panel-group>编辑页面设计</panel-group><panel-item icon="header" more>页眉和页脚</panel-item><panel-item icon="back" more>背景</panel-item><panel-item icon="water" more>水印</panel-item><panel-item icon="bates" more>Bates 编号</panel-item>
</div></panel-section>
${['内容', '表单', '动作向导', '识别文本', '保护', '签名和验证', '文件工具'].map(t => `<panel-section label="${t}"></panel-section>`).join('')}`);

/* ---------- overlays and taskbar ---------- */
define('ime-bar', `
:host{position:absolute;right:238px;bottom:40px;display:flex;align-items:center;width:50px;height:22px;background:#fff;padding-left:4px}
.grip{height:20px;border-left:2px dotted #b5b5b5;margin-right:5px}
.m{display:flex;flex-direction:column;gap:4px;align-items:center;margin-left:9px}
.m i{width:6px;height:2px;background:#000}
.m b{border:3px solid transparent;border-top-color:#000;border-bottom:0}`,
'<span class="grip"></span><ui-icon name="sogou"></ui-icon><span class="m"><i></i><b></b></span>');

define('level-meter', `
:host{position:absolute;right:0;bottom:40px;width:10px;height:57px;box-sizing:border-box;background:#4c5162;border:1px solid #2c303c;border-right:0;border-radius:4px 0 0 0;padding:6px 2px 4px 3px}
div{height:100%;background:repeating-linear-gradient(transparent 0 2px,#3f4454 2px 3px),linear-gradient(#262a36 40%,#e3cf3d 40%,#9be06a 65%,#43d3c8)}`, '<div></div>');

define('task-app', `
:host{display:flex;align-items:center;justify-content:center;width:48px;height:40px;margin-right:1px;flex:none}
:host([sys]){margin-right:0}
button{all:unset;box-sizing:border-box;width:40px;height:40px;display:flex;align-items:center;justify-content:center;border-bottom:2px solid transparent;padding-top:2px}
:host([run]) button{border-bottom-color:#76b9ed}
:host([on]) button{width:48px;background:#3d4249;border-bottom-color:#76b9ed}`,
  el => `<button aria-label="${el.getAttribute('icon')}"><ui-icon name="${el.getAttribute('icon')}"></ui-icon></button>`);

define('task-bar', `
:host{display:flex;align-items:center;height:40px;flex:none;background:#060a11;color:#fff}
.apps{display:flex;margin-left:3px;flex:1}
.tray{display:flex;align-items:center}
.tray ui-icon,.ime{width:24px;justify-content:center;text-align:center}
.ime{font:13px/20px ${UI}}
time{width:72px;text-align:center;font:12px/20px "Open Sans",sans-serif}
.n{width:40px;display:flex;justify-content:center}
.edge{border-left:1px solid #666;height:40px;width:5px;margin-left:8px}`,
`<task-app sys icon="win"></task-app><task-app sys icon="cortana"></task-app><task-app sys icon="taskview"></task-app>
<div class="apps"><task-app icon="edge"></task-app><task-app run icon="folder"></task-app><task-app icon="qq"></task-app><task-app run icon="sbrowser"></task-app><task-app run icon="word"></task-app><task-app run icon="tex"></task-app><task-app on icon="acro"></task-app><task-app run icon="snip"></task-app></div>
<div class="tray"><ui-icon name="chev"></ui-icon><ui-icon name="usb"></ui-icon><ui-icon name="shield"></ui-icon><ui-icon name="net"></ui-icon><ui-icon name="vol"></ui-icon><span class="ime">中</span><time>12:04<br>2019/8/24</time><span class="n"><ui-icon name="notif"></ui-icon></span><span class="edge"></span></div>`);

define('acrobat-app', `
:host{display:flex;flex-direction:column;height:100vh;position:relative}
main{display:flex;flex:1;min-height:0;border-top:1px solid #222}`,
`<title-bar></title-bar><menu-bar></menu-bar><file-toolbar></file-toolbar><view-toolbar></view-toolbar>
<main><nav-rail></nav-rail><doc-view></doc-view><doc-scrollbar></doc-scrollbar><side-panel></side-panel></main>
<task-bar></task-bar><ime-bar></ime-bar><level-meter></level-meter>`);
</script>
</body>
</html>
